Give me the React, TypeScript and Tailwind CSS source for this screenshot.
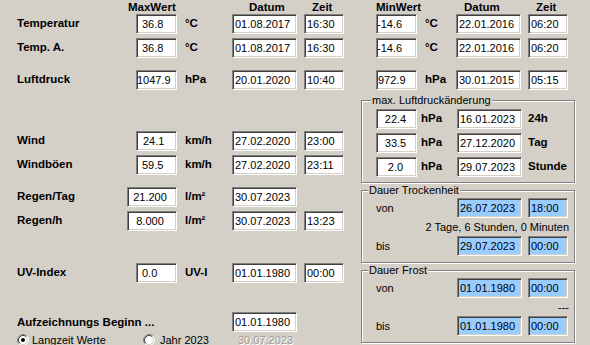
import type { ReactNode } from 'react'

// Win9x style sunken edit field
function Box({
  w,
  children,
  pad = 'pl-[2px]',
  blue = false,
}: {
  w: string
  children: ReactNode
  pad?: string
  blue?: boolean
}) {
  return (
    <div
      className={`${w} ${pad} h-[20px] shrink-0 flex items-center whitespace-nowrap overflow-hidden text-[11px] leading-none text-black border border-t-[#808080] border-l-[#808080] border-b-white border-r-white shadow-[inset_1px_1px_0_#404040,inset_-1px_-1px_0_#d4d0c8] ${
        blue ? 'bg-[#99ccff]' : 'bg-white'
      }`}
    >
      {children}
    </div>
  )
}

function Group({
  title,
  left,
  h,
  children,
}: {
  title: string
  left: string
  h: string
  children: ReactNode
}) {
  return (
    <div
      className={`relative w-[214px] ${h} border border-[#808080] shadow-[1px_1px_0_#fff,inset_1px_1px_0_#fff]`}
    >
      <span className={`absolute -top-[7px] ${left} px-[1px] bg-[#d4d0c8] leading-[13px] text-[11px] whitespace-nowrap`}>
        {title}
      </span>
      {children}
    </div>
  )
}

function Radio({ checked = false }: { checked?: boolean }) {
  return (
    <svg width="12" height="12" viewBox="0 0 12 12" className="shrink-0">
      <circle cx="6" cy="6" r="4.5" fill="#fff" />
      <path d="M2.11 9.89 A5.5 5.5 0 0 1 9.89 2.11" stroke="#808080" fill="none" />
      <path d="M9.89 2.11 A5.5 5.5 0 0 1 2.11 9.89" stroke="#fff" fill="none" />
      <path d="M2.82 9.18 A4.5 4.5 0 0 1 9.18 2.82" stroke="#404040" fill="none" />
      <path d="M9.18 2.82 A4.5 4.5 0 0 1 2.82 9.18" stroke="#d4d0c8" fill="none" />
      {checked && <circle cx="6" cy="6" r="2" fill="#000" />}
    </svg>
  )
}

const label = 'font-bold text-[11.5px] whitespace-nowrap'

function TopRow({
  name,
  max,
  maxPad,
  unit,
  maxDate,
  maxTime,
  min,
  minPad,
  minDate,
  minTime,
}: {
  name: string
  max: string
  maxPad: string
  unit: string
  maxDate: string
  maxTime: string
  min: string
  minPad: string
  minDate: string
  minTime: string
}) {
  return (
    <div className="flex items-center h-[20px]">
      <div className={`w-[136px] pl-[17px] ${label}`}>{name}</div>
      <Box w="w-[41px]" pad={maxPad}>{max}</Box>
      <div className={`w-[55px] pl-[8px] ${label}`}>{unit}</div>
      <Box w="w-[65px]">{maxDate}</Box>
      <div className="w-[7px]" />
      <Box w="w-[40px]">{maxTime}</Box>
      <div className="w-[32px]" />
      <Box w="w-[41px]" pad={minPad}>{min}</Box>
      <div className={`w-[39px] pl-[8px] ${label}`}>{unit}</div>
      <Box w="w-[65px]">{minDate}</Box>
      <div className="w-[7px]" />
      <Box w="w-[40px]">{minTime}</Box>
    </div>
  )
}

function ChangeRow({ value, date, name }: { value: string; date: string; name: string }) {
  return (
    <div className="flex items-center h-[20px] pl-[14px]">
      <Box w="w-[41px]" pad="justify-center pr-[2px]">{value}</Box>
      <div className={`w-[40px] pl-[4px] ${label}`}>hPa</div>
      <Box w="w-[65px]">{date}</Box>
      <div className={`ml-[6px] ${label}`}>{name}</div>
    </div>
  )
}

function SpanRow({ name, date, time }: { name: string; date: string; time: string }) {
  return (
    <div className="flex items-center h-[20px] pl-[14px]">
      <div className="w-[81px] text-[11px]">{name}</div>
      <Box w="w-[65px]" blue>{date}</Box>
      <div className="w-[6px]" />
      <Box w="w-[40px]" blue>{time}</Box>
    </div>
  )
}

export default function App() {
  return (
    <div className="w-[590px] h-[345px] overflow-hidden bg-[#d4d0c8] text-black font-['Liberation_Sans',Arial,sans-serif] text-[11px]">
      {/* Column headers */}
      <div className={`flex h-[14px] leading-[14px] ${label}`}>
        <div className="w-[128px]" />
        <div className="w-[121px]">MaxWert</div>
        <div className="w-[63px]">Datum</div>
        <div className="w-[64px]">Zeit</div>
        <div className="w-[88px]">MinWert</div>
        <div className="w-[72px]">Datum</div>
        <div>Zeit</div>
      </div>

      {/* Temperature and pressure */}
      <div className="flex flex-col">
        <TopRow name="Temperatur" max="36.8" maxPad="pl-[5px]" unit="°C" maxDate="01.08.2017" maxTime="16:30" min="-14.6" minPad="pl-0" minDate="22.01.2016" minTime="06:20" />
        <div className="h-[4px]" />
        <TopRow name="Temp. A." max="36.8" maxPad="pl-[5px]" unit="°C" maxDate="01.08.2017" maxTime="16:30" min="-14.6" minPad="pl-0" minDate="22.01.2016" minTime="06:20" />
        <div className="h-[12px]" />
        <TopRow name="Luftdruck" max="1047.9" maxPad="pl-0" unit="hPa" maxDate="20.01.2020" maxTime="10:40" min="972.9" minPad="pl-[1px]" minDate="30.01.2015" minTime="05:15" />
      </div>

      <div className="flex">
        {/* Left column */}
        <div className="w-[361px] shrink-0 pt-[41px] flex flex-col">
          <div className="flex items-center h-[20px]">
            <div className={`w-[136px] pl-[17px] ${label}`}>Wind</div>
            <Box w="w-[41px]" pad="pl-[6px]">24.1</Box>
            <div className={`w-[55px] pl-[8px] ${label}`}>km/h</div>
            <Box w="w-[65px]">27.02.2020</Box>
            <div className="w-[7px]" />
            <Box w="w-[40px]">23:00</Box>
          </div>
          <div className="flex items-center h-[20px] mt-[4px]">
            <div className={`w-[136px] pl-[17px] ${label}`}>Windböen</div>
            <Box w="w-[41px]" pad="pl-[5px]">59.5</Box>
            <div className={`w-[55px] pl-[8px] ${label}`}>km/h</div>
            <Box w="w-[65px]">27.02.2020</Box>
            <div className="w-[7px]" />
            <Box w="w-[40px]">23:11</Box>
          </div>
          <div className="flex items-center h-[20px] mt-[12px]">
            <div className={`w-[127px] pl-[17px] ${label}`}>Regen/Tag</div>
            <Box w="w-[50px]" pad="justify-center pr-[4px]">21.200</Box>
            <div className={`w-[55px] pl-[8px] ${label}`}>l/m²</div>
            <Box w="w-[65px]">30.07.2023</Box>
          </div>
          <div className="flex items-center h-[20px] mt-[4px]">
            <div className={`w-[127px] pl-[17px] ${label}`}>Regen/h</div>
            <Box w="w-[50px]" pad="justify-center pr-[4px]">8.000</Box>
            <div className={`w-[55px] pl-[8px] ${label}`}>l/m²</div>
            <Box w="w-[65px]">30.07.2023</Box>
            <div className="w-[7px]" />
            <Box w="w-[40px]">13:23</Box>
          </div>
          <div className="flex items-center h-[20px] mt-[32px]">
            <div className={`w-[136px] pl-[17px] ${label}`}>UV-Index</div>
            <Box w="w-[41px]" pad="pl-[5px]">0.0</Box>
            <div className={`w-[55px] pl-[8px] ${label}`}>UV-I</div>
            <Box w="w-[65px]">01.01.1980</Box>
            <div className="w-[7px]" />
            <Box w="w-[40px]">00:00</Box>
          </div>
          <div className="flex items-center h-[20px] mt-[29px]">
            <div className={`w-[232px] pl-[17px] pt-[1px] ${label}`}>Aufzeichnungs Beginn ...</div>
            <Box w="w-[65px]">01.01.1980</Box>
          </div>
          <div className="flex items-center h-[12px] mt-[2px] pl-[17px]">
            <Radio checked />
            <span className="ml-[3px] w-[111px] whitespace-nowrap">Langzeit Werte</span>
            <Radio />
            <span className="ml-[5px] w-[66px] whitespace-nowrap">Jahr 2023</span>
            <span className="ml-[12px] text-[#a09c94] [text-shadow:1px_1px_0_#fff]">30.07.2023</span>
          </div>
        </div>

        {/* Right column: group boxes */}
        <div className="flex flex-col">
          <div className="mt-[10px]">
            <Group title="max. Luftdruckänderung" left="left-[9px]" h="h-[83px]">
              <div className="flex flex-col gap-[4px] pt-[8px]">
                <ChangeRow value="22.4" date="16.01.2023" name="24h" />
                <ChangeRow value="33.5" date="27.12.2020" name="Tag" />
                <ChangeRow value="2.0" date="29.07.2023" name="Stunde" />
              </div>
            </Group>
          </div>
          <div className="mt-[7px]">
            <Group title="Dauer Trockenheit" left="left-[6px]" h="h-[73px]">
              <div className="flex flex-col pt-[7px]">
                <SpanRow name="von" date="26.07.2023" time="18:00" />
                <div className="h-[18px] flex items-center justify-end pr-[5px] whitespace-nowrap">
                  2 Tage, 6 Stunden, 0 Minuten
                </div>
                <SpanRow name="bis" date="29.07.2023" time="00:00" />
              </div>
            </Group>
          </div>
          <div className="mt-[7px]">
            <Group title="Dauer Frost" left="left-[6px]" h="h-[73px]">
              <div className="flex flex-col pt-[7px]">
                <SpanRow name="von" date="01.01.1980" time="00:00" />
                <div className="h-[18px] flex items-center justify-end pr-[5px]">---</div>
                <SpanRow name="bis" date="01.01.1980" time="00:00" />
              </div>
            </Group>
          </div>
        </div>
      </div>
    </div>
  )
}
